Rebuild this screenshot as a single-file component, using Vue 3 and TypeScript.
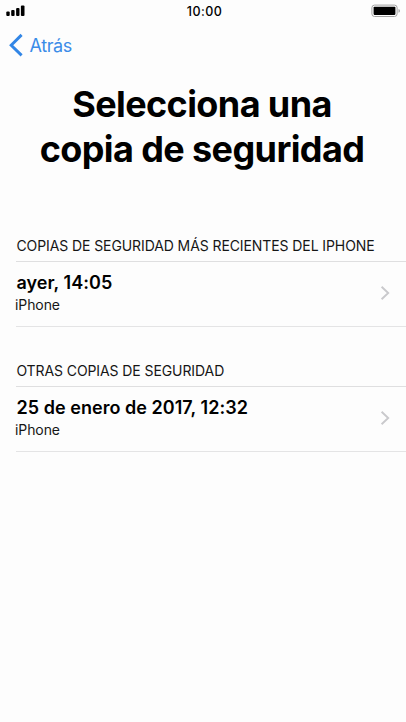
<script setup lang="ts">
interface Backup {
  date: string
  device: string
}

interface BackupGroup {
  heading: string
  kind: string
  backups: Backup[]
}

const titleLines: string[] = ['Selecciona una', 'copia de seguridad']

const groups: BackupGroup[] = [
  {
    heading: 'COPIAS DE SEGURIDAD MÁS RECIENTES DEL IPHONE',
    kind: 'recent',
    backups: [{ date: 'ayer, 14:05', device: 'iPhone' }],
  },
  {
    heading: 'OTRAS COPIAS DE SEGURIDAD',
    kind: 'other',
    backups: [{ date: '25 de enero de 2017, 12:32', device: 'iPhone' }],
  },
]
</script>

<template>
  <main class="screen">
    <header class="status">
      <svg class="signal" width="20" height="12" viewBox="0 0 20 12" aria-hidden="true">
        <rect x="0.3" y="6.6" width="3.4" height="4.4" rx="1" />
        <rect x="5.2" y="5" width="3.4" height="6" rx="1" />
        <rect x="10.1" y="3" width="3.4" height="8" rx="1" />
        <rect x="14.9" y="0.6" width="3.6" height="10.4" rx="1" />
      </svg>
      <time class="clock">10:00</time>
      <svg class="battery" width="30" height="14" viewBox="0 0 30 14" aria-hidden="true">
        <rect x="0.9" y="1.1" width="25.2" height="11.4" rx="2.6" fill="#fff" stroke="#a2a2a2" stroke-width="1" />
        <rect x="2.6" y="2.7" width="21.8" height="8.2" rx="0.8" fill="#000" />
        <path d="M27.6 4.9c1.5.3 1.5 3.5 0 3.8z" fill="#8d8d8d" />
      </svg>
    </header>

    <nav class="nav">
      <button class="back" type="button">
        <svg width="14" height="24" viewBox="0 0 14 24" aria-hidden="true">
          <path d="M12.6 1.9 2.2 12.2l10.4 10.2" fill="none" stroke="#3286e6" stroke-width="2.9" />
        </svg>
        <span>Atrás</span>
      </button>
    </nav>

    <h1 class="title">
      <span v-for="line in titleLines" :key="line">{{ line }}</span>
    </h1>

    <section v-for="group in groups" :key="group.kind" class="group" :class="group.kind">
      <h2 class="heading">{{ group.heading }}</h2>
      <ul class="list">
        <li v-for="backup in group.backups" :key="backup.date" class="row">
          <div class="info">
            <span class="date">{{ backup.date }}</span>
            <span class="device">{{ backup.device }}</span>
          </div>
          <svg class="chevron" width="10" height="16" viewBox="0 0 10 16" aria-hidden="true">
            <path d="M1.6 1.7 8.2 8l-6.6 6.3" fill="none" stroke="#c9c9cc" stroke-width="1.9" />
          </svg>
        </li>
      </ul>
    </section>
  </main>
</template>

<style>
body {
  background: #fdfdfd;
}
</style>

<style scoped>
.screen {
  box-sizing: border-box;
  width: 100%;
  height: 722px;
  overflow: hidden;
  background: #fdfdfd;
  color: #000;
  font-family: Inter, 'Liberation Sans', sans-serif;
}

.status {
  display: grid;
  grid-template-columns: 1fr auto 1fr;
  align-items: center;
  height: 22px;
  padding: 0 6px;
}

.signal {
  display: block;
}

.clock {
  padding: 2px 0 0 3px;
  font-size: 12.5px;
  font-weight: 500;
  line-height: 20px;
  letter-spacing: 0.45px;
}

.battery {
  display: block;
  justify-self: end;
  margin-right: -1px;
}

.nav {
  display: flex;
  align-items: center;
  height: 46px;
  padding-left: 9px;
}

.back {
  display: flex;
  align-items: center;
  gap: 6.5px;
  padding: 0;
  border: 0;
  background: none;
  color: #3b8ce8;
  font: inherit;
  font-size: 18px;
  letter-spacing: -0.4px;
}

.title {
  display: flex;
  flex-direction: column;
  align-items: center;
  margin: 14px 0 0;
  padding-right: 2px;
  font-size: 36px;
  font-weight: 700;
  line-height: 45px;
  letter-spacing: -0.6px;
}

.group {
  margin-top: 33px;
  padding-left: 16px;
}

.recent {
  margin-top: 63px;
}

.heading {
  margin: 0;
  padding-left: 0.4px;
  height: 26px;
  font-size: 14px;
  font-weight: 400;
  line-height: 22px;
  letter-spacing: -0.09px;
  white-space: nowrap;
  color: #161616;
}

.list {
  margin: 0;
  padding: 0;
  list-style: none;
  border-top: 1px solid #dfdfe0;
}

.row {
  display: flex;
  align-items: center;
  justify-content: space-between;
  box-sizing: border-box;
  height: 65px;
  padding: 0 16px 1px 0;
  border-bottom: 1px solid #e4e4e5;
}

.info {
  display: flex;
  flex-direction: column;
}

.date {
  margin-left: 0.5px;
  font-size: 18px;
  font-weight: 600;
  line-height: 24px;
  letter-spacing: 0.04px;
}

.device {
  margin: 0 0 2px -1px;
  font-size: 14px;
  line-height: 20px;
  letter-spacing: -0.09px;
  color: #161616;
}

.chevron {
  margin-bottom: 1px;
}
</style>
